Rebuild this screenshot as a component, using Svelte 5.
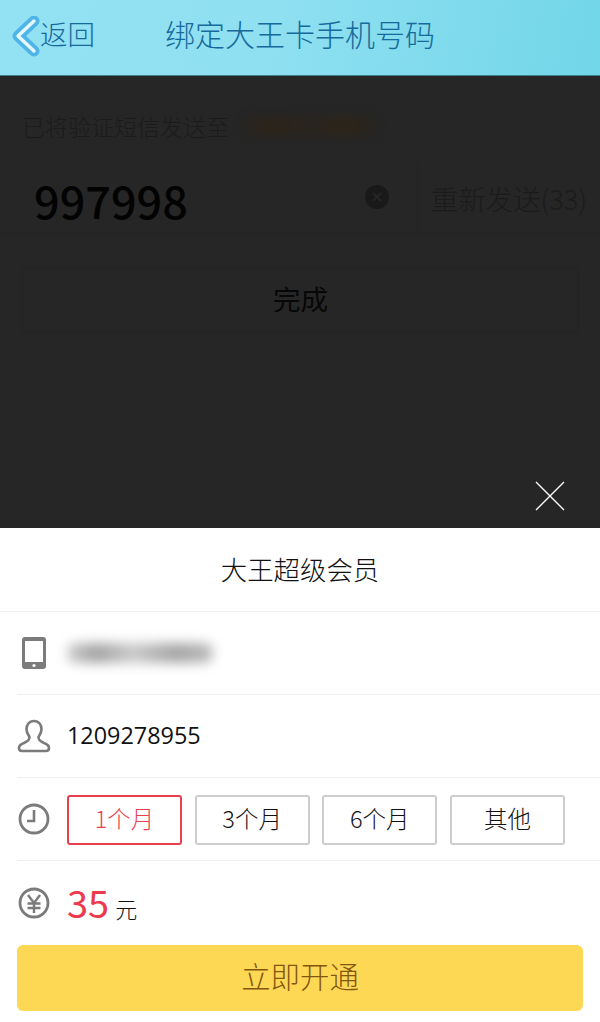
<script>
  const tabs = [
    { label: '1个月', on: true },
    { label: '3个月', on: false },
    { label: '6个月', on: false },
    { label: '其他', on: false }
  ];
</script>

<div class="page">
  <header class="top">
    <div class="back">
      <svg class="chev" width="34" height="46" viewBox="0 0 34 46">
        <path d="M23 5 L7 20 L23 35" fill="none" stroke="#4fb4e8" stroke-width="11" stroke-linecap="round" stroke-linejoin="round"/>
        <path d="M23 5 L7 20 L23 35" fill="none" stroke="#e4f8fd" stroke-width="3.4" stroke-linecap="round" stroke-linejoin="round"/>
      </svg>
      <span class="backtext">返回</span>
    </div>
    <h1>绑定大王卡手机号码</h1>
  </header>

  <main class="dim">
    <p class="sent">已将验证短信发送至<span class="blurred"></span></p>
    <div class="code">
      <span class="digits">997998</span>
      <span class="clear">
        <svg width="10" height="10" viewBox="0 0 10 10"><path d="M1 1 L9 9 M9 1 L1 9" stroke="#262626" stroke-width="2"/></svg>
      </span>
      <span class="resend">重新发送(33)</span>
    </div>
    <div class="done">完成</div>
    <div class="closewrap">
      <svg width="30" height="30" viewBox="0 0 30 30"><path d="M1 1 L29 29 M29 1 L1 29" stroke="#fff" stroke-width="1.4"/></svg>
    </div>
  </main>

  <section class="sheet">
    <div class="title">大王超级会员</div>

    <div class="row">
      <svg class="ic" width="34" height="34" viewBox="0 0 34 34">
        <path fill-rule="evenodd" d="M8 1 H26 Q29 1 29 4 V30 Q29 33 26 33 H8 Q5 33 5 30 V4 Q5 1 8 1 Z M8 5 V26 H26 V5 Z" fill="#7b7b7b"/>
        <circle cx="17" cy="29.5" r="1.6" fill="#fff"/>
      </svg>
      <span class="blurphone"></span>
    </div>

    <div class="row">
      <svg class="ic" width="34" height="34" viewBox="0 0 34 34">
        <path d="M17 2 C12 2 9.5 6 9.5 10 C9.5 14 11.5 16 12.5 18 C12.5 21 11 22 7 24 C4 25 2 27 2 29 C2 31 3 32 5 32 H29 C31 32 32 31 32 29 C32 27 30 25 27 24 C23 22 21.5 21 21.5 18 C22.5 16 24.5 14 24.5 10 C24.5 6 22 2 17 2 Z" fill="none" stroke="#7b7b7b" stroke-width="2.6"/>
      </svg>
      <span class="num">1209278955</span>
    </div>

    <div class="row">
      <svg class="ic" width="34" height="34" viewBox="0 0 34 34">
        <circle cx="17" cy="17" r="14" fill="none" stroke="#7b7b7b" stroke-width="2.8"/>
        <path d="M17 8 V19 H10" fill="none" stroke="#7b7b7b" stroke-width="2.6"/>
      </svg>
      <div class="tabs">
        {#each tabs as t}
          <div class="tab" class:on={t.on}>{t.label}</div>
        {/each}
      </div>
    </div>

    <div class="row price">
      <svg class="ic" width="34" height="34" viewBox="0 0 34 34">
        <circle cx="17" cy="17" r="14" fill="none" stroke="#7b7b7b" stroke-width="2.8"/>
        <path d="M11 9 L17 17 L23 9 M10.5 17.5 H23.5 M10.5 22 H23.5 M17 17 V27" fill="none" stroke="#7b7b7b" stroke-width="2.4"/>
      </svg>
      <span class="amount">35</span><span class="unit">元</span>
    </div>

    <div class="cta">立即开通</div>
  </section>
</div>

<style>
  :global(body) { margin: 0; background: #fff; }
  .page {
    width: 600px;
    height: 1022px;
    display: flex;
    flex-direction: column;
    overflow: hidden;
    font-family: "Noto Sans CJK SC", "Open Sans", sans-serif;
  }
  .top {
    height: 76px;
    flex: none;
    box-sizing: border-box;
    padding-bottom: 10px;
    border-bottom: 1px solid #3f7f8c;
    background: linear-gradient(100deg, #93e2f3 0%, #8fe0f1 45%, #72d6e9 100%);
    display: flex;
    align-items: center;
    color: #16699b;
  }
  .back { display: flex; align-items: center; margin-left: 11px; }
  .chev { margin-right: -5px; flex: none; position: relative; top: 6px; }
  .backtext { font-size: 27.5px; font-weight: 300; position: relative; z-index: 1; }
  h1 {
    margin: 0 0 0 70px;
    font-size: 30px;
    font-weight: 300;
    white-space: nowrap;
  }
  .dim {
    height: 452px;
    flex: none;
    background: #262626;
    display: flex;
    flex-direction: column;
    box-sizing: border-box;
  }
  .sent {
    margin: 34px 0 0 22px;
    font-size: 23px;
    line-height: 32px;
    height: 32px;
    color: #1b1b1b;
    font-weight: 300;
    display: flex;
    align-items: center;
  }
  .blurred {
    width: 132px;
    height: 20px;
    margin-left: 15px;
    border-radius: 10px;
    background: linear-gradient(90deg, #272420, #2c2419 20%, #292520 50%, #2e2519 75%, #272420);
    filter: blur(4px);
  }
  .code {
    margin-top: 21px;
    height: 71px;
    box-sizing: border-box;
    display: flex;
    align-items: center;
    border-bottom: 1px solid #232323;
  }
  .digits {
    margin-left: 34px;
    font-size: 45px;
    font-weight: 500;
    color: #030303;
    line-height: 1;
    width: 331px;
    flex: none;
    position: relative;
    top: 1px;
  }
  .clear {
    width: 24px;
    height: 24px;
    border-radius: 50%;
    background: #191919;
    display: flex;
    align-items: center;
    justify-content: center;
    flex: none;
    position: relative;
    top: -1px;
  }
  .resend {
    margin-left: 28px;
    padding-left: 13px;
    align-self: stretch;
    display: flex;
    align-items: center;
    box-sizing: border-box;
    border-left: 1px solid #232323;
    font-size: 27.4px;
    color: #1b1b1b;
    font-weight: 300;
    white-space: nowrap;
  }
  .done {
    margin: 34px 21px 0 22px;
    height: 65px;
    padding-bottom: 6px;
    border: 1px solid #232323;
    box-sizing: border-box;
    border-radius: 4px;
    display: flex;
    align-items: center;
    justify-content: center;
    font-size: 27.6px;
    color: #070707;
  }
  .closewrap {
    margin-top: auto;
    margin-bottom: 17px;
    align-self: flex-end;
    margin-right: 35px;
    height: 30px;
  }
  .sheet { flex: 1; background: #fff; display: flex; flex-direction: column; }
  .title {
    height: 84px;
    flex: none;
    box-sizing: border-box;
    padding-bottom: 3px;
    border-bottom: 1px solid #efefef;
    display: flex;
    align-items: center;
    justify-content: center;
    font-size: 26.4px;
    color: #111;
    font-weight: 300;
  }
  .row {
    height: 83px;
    flex: none;
    box-sizing: border-box;
    margin-left: 17px;
    border-bottom: 1px solid #efefef;
    display: flex;
    align-items: center;
  }
  .ic { flex: none; margin-right: 16px; }
  .blurphone {
    width: 146px;
    height: 20px;
    background: linear-gradient(90deg, #cfcfcf, #a2a2a2 20%, #cacaca 45%, #a4a4a4 75%, #bdbdbd);
    border-radius: 8px;
    filter: blur(6px);
  }
  .num { font-family: "Open Sans", sans-serif; font-size: 23.4px; color: #111; position: relative; top: -1px; }
  .tabs { display: flex; gap: 12.67px; margin-top: 1px; }
  .tab {
    width: 115px;
    height: 50px;
    box-sizing: border-box;
    padding-bottom: 3px;
    border: 2px solid #cdcdcd;
    border-radius: 3px;
    display: flex;
    align-items: center;
    justify-content: center;
    font-size: 23.5px;
    color: #111;
    font-weight: 300;
  }
  .tab.on { border-color: #e8404f; color: #e8404f; }
  .price { border-bottom: 0; height: 84px; }
  .amount { font-size: 38px; color: #ec3a4c; font-weight: 400; line-height: 1; position: relative; top: -1px; }
  .unit { font-size: 22px; color: #111; margin-left: 6px; font-weight: 300; position: relative; top: 5px; }
  .cta {
    margin: 0 17px;
    height: 66px;
    flex: none;
    padding-bottom: 6px;
    box-sizing: border-box;
    background: #fdd855;
    border-radius: 6px;
    display: flex;
    align-items: center;
    justify-content: center;
    font-size: 29.4px;
    font-weight: 300;
    color: #85560f;
  }
</style>
